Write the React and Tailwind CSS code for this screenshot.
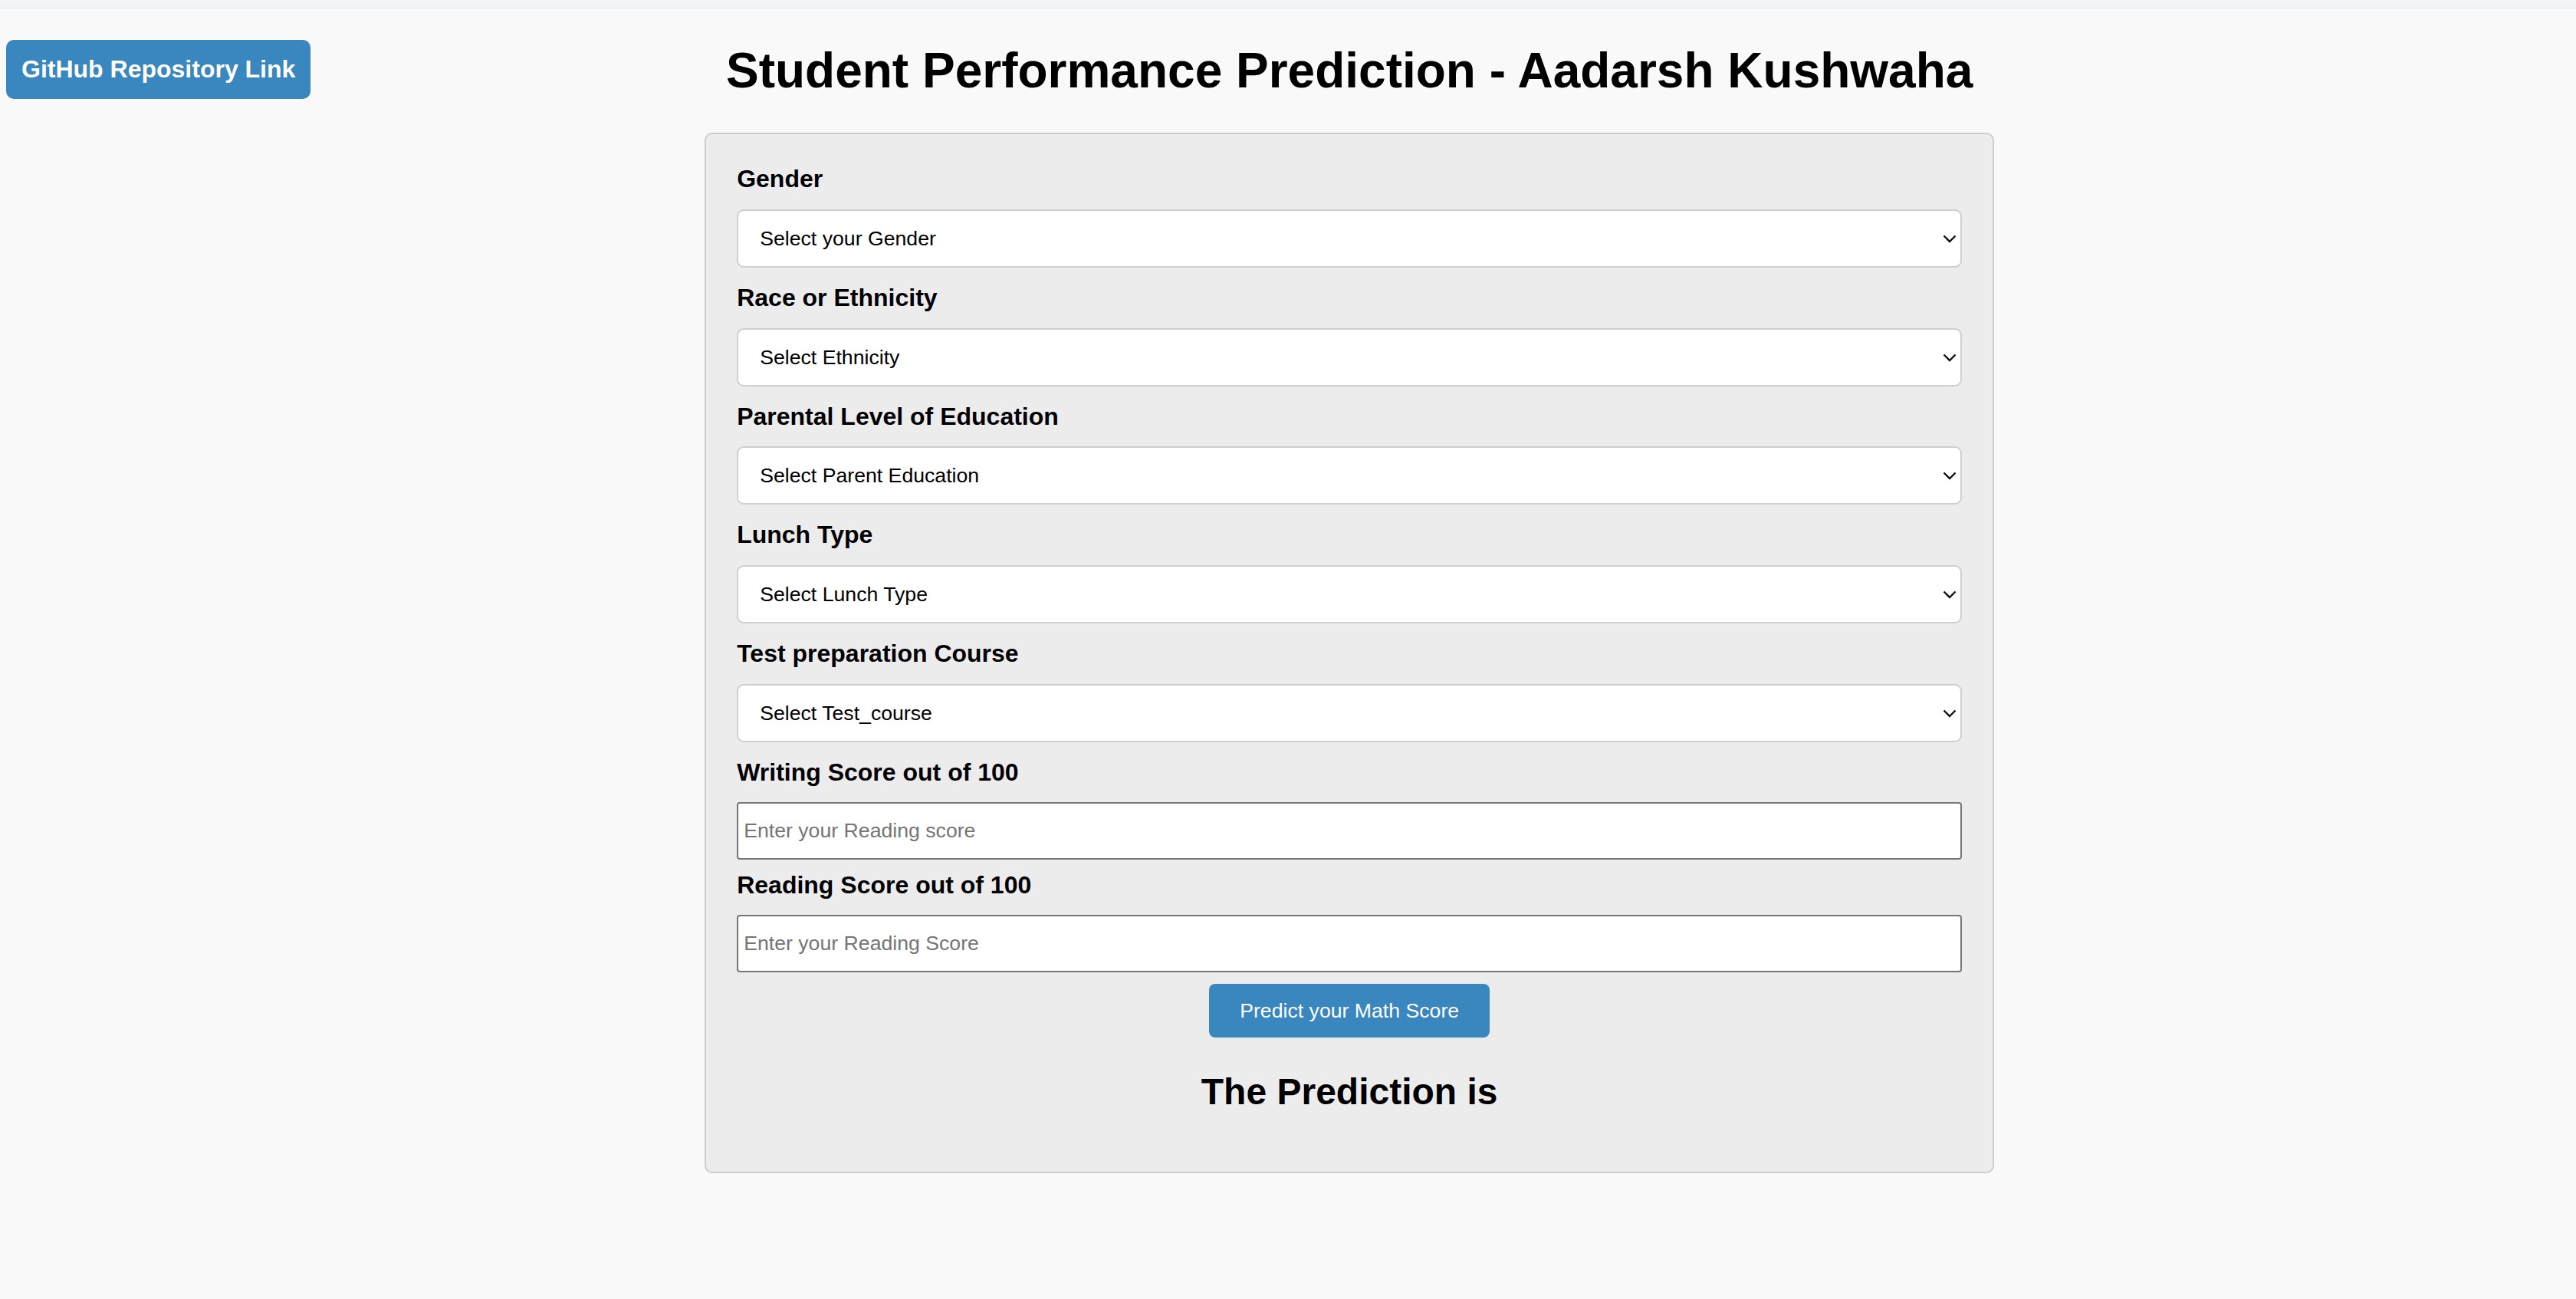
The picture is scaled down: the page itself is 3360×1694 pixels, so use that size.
import React from 'react';

const SELECTS = [
  { label: 'Gender', placeholder: 'Select your Gender' },
  { label: 'Race or Ethnicity', placeholder: 'Select Ethnicity' },
  { label: 'Parental Level of Education', placeholder: 'Select Parent Education' },
  { label: 'Lunch Type', placeholder: 'Select Lunch Type' },
  { label: 'Test preparation Course', placeholder: 'Select Test_course' },
];

const INPUTS = [
  { label: 'Writing Score out of 100', placeholder: 'Enter your Reading score' },
  { label: 'Reading Score out of 100', placeholder: 'Enter your Reading Score' },
];

function Chevron() {
  return (
    <svg width="18" height="11" viewBox="0 0 18 11" className="pointer-events-none absolute right-[7px] top-[33px]">
      <polyline points="1.5,1.5 9,9 16.5,1.5" fill="none" stroke="#111" strokeWidth="2.4" />
    </svg>
  );
}

export default function App() {
  const [score, setScore] = React.useState({ writing: '', reading: '' });

  return (
    <div className="min-h-screen bg-[#f9f9f9] text-black" style={{ fontFamily: '"Liberation Sans", Arial, Helvetica, sans-serif' }}>
      {/* browser-ish top strip */}
      <div className="h-[11px] bg-[#f3f4f6] border-b border-[#e7e8ec]" />

      <div className="flex items-start">
        <a
          href="#"
          className="shrink-0 ml-[8px] mt-[41px] px-[20px] py-[20px] rounded-[10px] bg-[#3a86be] text-white text-[32px] leading-[36.8px] font-bold"
        >
          GitHub Repository Link
        </a>

        <main className="flex-1 mr-[245px] flex flex-col items-center">
          <h1 className="mt-[44px] mb-[44px] text-[64px] leading-[74px] font-bold">
            Student Performance Prediction - Aadarsh Kushwaha
          </h1>

          <form
            onSubmit={e => e.preventDefault()}
            className="w-[1682px] bg-[#ececec] border-2 border-[#cdcdcd] rounded-[10px] p-[40px] flex flex-col"
          >
            {SELECTS.map(field => (
              <div key={field.label} className="flex flex-col">
                <label className="text-[32px] leading-[36.8px] font-bold mb-[21px]">{field.label}</label>
                <div className="relative mb-[21px]">
                  <select
                    defaultValue=""
                    className="appearance-none w-full h-[76px] bg-white border-2 border-[#cfcfcf] rounded-[9px] pl-[28px] text-[26.67px] text-black outline-none"
                  >
                    <option value="" disabled>{field.placeholder}</option>
                  </select>
                  <Chevron />
                </div>
              </div>
            ))}

            {INPUTS.map((field, i) => (
              <div key={field.label} className="flex flex-col">
                <label className="text-[32px] leading-[36.8px] font-bold mb-[20px]">{field.label}</label>
                <input
                  type="number"
                  placeholder={field.placeholder}
                  value={i === 0 ? score.writing : score.reading}
                  onChange={e => setScore(s => (i === 0 ? { ...s, writing: e.target.value } : { ...s, reading: e.target.value }))}
                  className="h-[75px] mb-[15px] bg-white border-2 border-[#767676] rounded-[4px] pl-[7px] text-[26.67px] placeholder:text-[#757575] outline-none"
                />
              </div>
            ))}

            <button
              type="submit"
              className="self-center w-[366px] h-[70px] rounded-[8px] bg-[#3a86be] text-white text-[26.67px]"
            >
              Predict your Math Score
            </button>

            <h2 className="mt-[43px] mb-[37px] text-center text-[48px] leading-[55px] font-bold">The Prediction is</h2>
          </form>
        </main>
      </div>
    </div>
  );
}
